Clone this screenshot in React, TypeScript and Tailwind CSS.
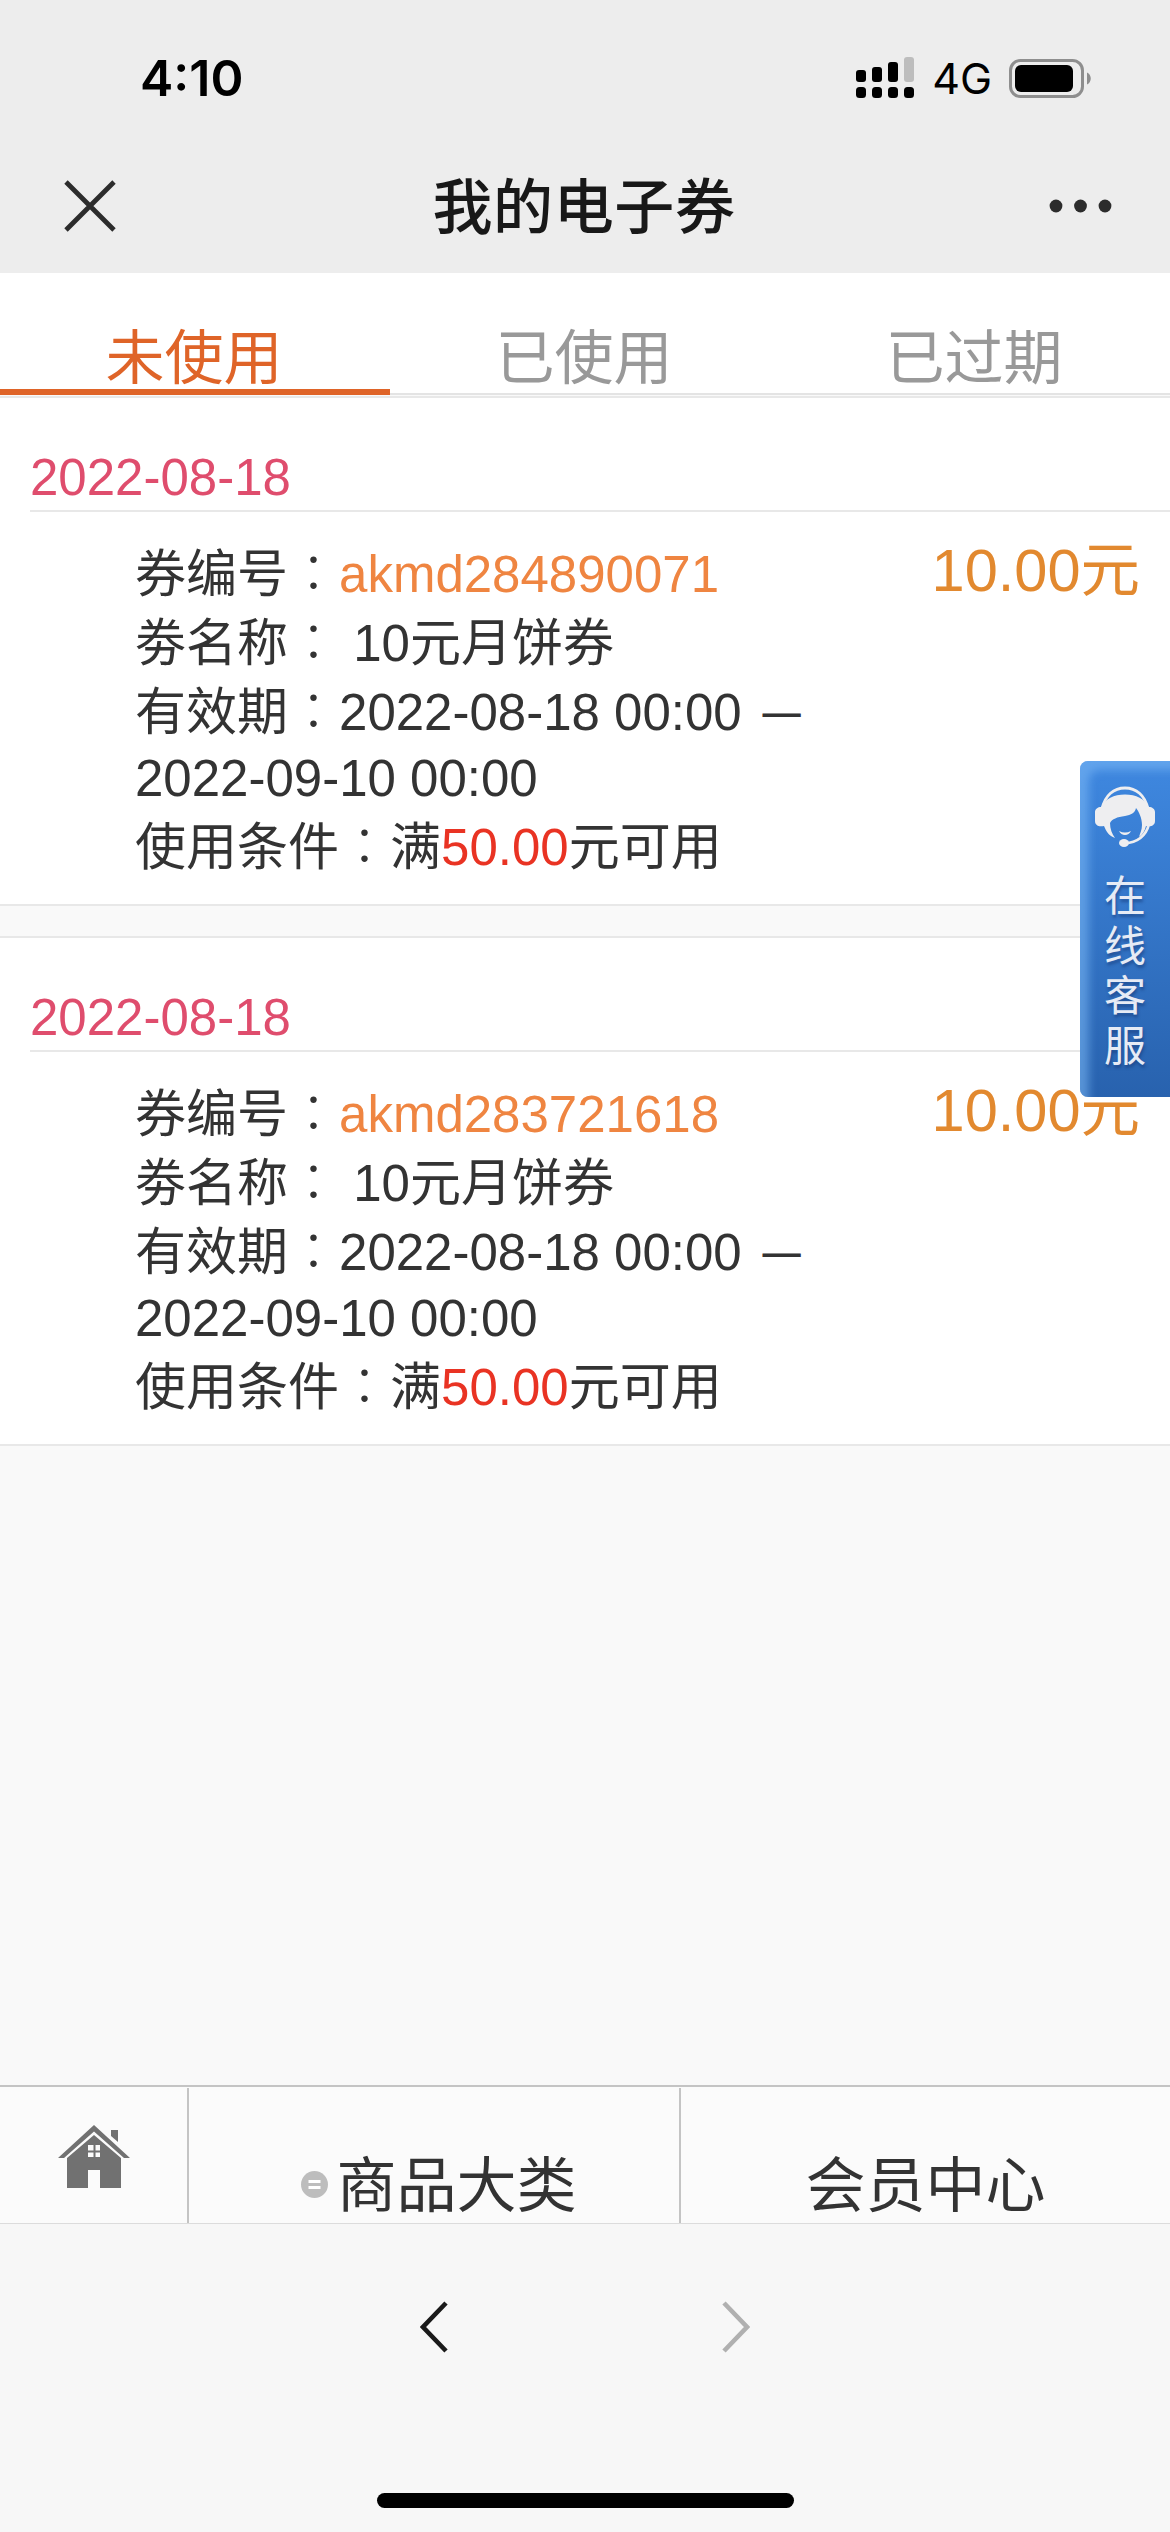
import React from 'react';

interface Coupon {
  date: string;
  code: string;
  name: string;
  start: string;
  end: string;
  threshold: string;
  amount: string;
}

const tabs = ['未使用', '已使用', '已过期'];

const coupons: Coupon[] = [
  {
    date: '2022-08-18',
    code: 'akmd284890071',
    name: '10元月饼券',
    start: '2022-08-18 00:00',
    end: '2022-09-10 00:00',
    threshold: '50.00',
    amount: '10.00',
  },
  {
    date: '2022-08-18',
    code: 'akmd283721618',
    name: '10元月饼券',
    start: '2022-08-18 00:00',
    end: '2022-09-10 00:00',
    threshold: '50.00',
    amount: '10.00',
  },
];

// the TC face keeps the full-width colon in the middle of its cell
const Colon = () => (
  <span className="font-['Noto_Sans_CJK_TC',sans-serif] leading-none font-light">：</span>
);

const SignalIcon = () => (
  <svg width="59" height="42" viewBox="0 0 59 42">
    <rect x="0" y="13" width="10" height="12" rx="3" />
    <rect x="16" y="10" width="10" height="15" rx="3" />
    <rect x="32" y="5" width="10" height="20" rx="3" />
    <rect x="48" y="0" width="10" height="25" rx="3" fill="#bdbdbd" />
    <rect x="0" y="30" width="10" height="11" rx="3.5" />
    <rect x="16" y="30" width="10" height="11" rx="3.5" />
    <rect x="32" y="30" width="10" height="11" rx="3.5" />
    <rect x="48" y="30" width="10" height="11" rx="3.5" />
  </svg>
);

const BatteryIcon = () => (
  <svg width="83" height="39" viewBox="0 0 83 39">
    <rect x="1.5" y="1.5" width="72" height="36" rx="10" fill="none" stroke="#8e8e8e" strokeWidth="3" />
    <rect x="6" y="6" width="58" height="27" rx="6" />
    <path d="M78 13.5c5 2 5 10 0 12z" fill="#8e8e8e" />
  </svg>
);

const CloseIcon = () => (
  <svg width="52" height="52" viewBox="0 0 52 52" stroke="#2c2c2c" strokeWidth="4.8">
    <path d="M2 2l48 48M50 2L2 50" />
  </svg>
);

const MoreIcon = () => (
  <svg width="64" height="14" viewBox="0 0 64 14" fill="#2c2c2c">
    <circle cx="7" cy="7" r="6.4" />
    <circle cx="31.5" cy="7" r="6.4" />
    <circle cx="56" cy="7" r="6.4" />
  </svg>
);

const HomeIcon = () => (
  <svg width="72" height="64" viewBox="0 0 72 64" fill="#717171">
    <path d="M36 0l36 33h-6L36 6.5 6 33H0z" />
    <path d="M53 5h7v12l-7-6z" />
    <path
      fillRule="evenodd"
      d="M36 10l27 23v30H42V45H30v18H9V33zM30 20h5.5v5.5H30zM37.5 20H42v5.5h-4.5zM30 27.5h5.5V32H30zM37.5 27.5H42V32h-4.5z"
    />
  </svg>
);

const MenuBadge = () => (
  <svg width="27" height="27" viewBox="0 0 27 27">
    <circle cx="13.5" cy="13.5" r="13.5" fill="#bdbdbd" />
    <path d="M7.5 10.5h12M7.5 16.5h12" stroke="#fff" strokeWidth="3.2" />
  </svg>
);

const HeadsetIcon = () => (
  <svg width="62" height="62" viewBox="0 0 62 62" fill="#eeeef0">
    <path
      d="M8 23C11 9 20 2 31 2s20 7 23 21M55 38c-3 12-12 19-24 19"
      fill="none"
      stroke="#eeeef0"
      strokeWidth="2.8"
    />
    {/* ear cups, hair and the sides of the face */}
    <path d="M10 40c-6 1-9-1-9-5V26c0-3 3-5 6-5C11 13 20 8.5 31 8.5S51 13 55 21c3 0 6 2 6 5v9c0 4-3 6-9 5-1 5-4 9-7 11 1-4 3-7 3-12 0-7-3-13-6-17-1 5-5 7-11 8-8 1-13 3-15 7 0 6 2 11 5 15-6-2-9-7-11-12z" />
    <path d="M25 45q6 3 12 0-2 4-6 4t-6-4z" />
    <ellipse cx="30" cy="57" rx="5" ry="4" />
  </svg>
);

const CouponCard: React.FC<{ coupon: Coupon }> = ({ coupon }) => (
  <div className="h-[510px] border-y-2 border-[#e8e8e8] bg-white">
    <div className="ml-[30px] h-[114px] border-b-2 border-[#e8e8e8] pt-[50px] text-[51px] leading-[60px] text-[#df4d6d]">
      {coupon.date}
    </div>
    <div className="flex justify-between pt-[28px] pr-[30px] pl-[135px]">
      <div className="text-[51px] leading-[69px] whitespace-nowrap text-[#333]">
        <p>
          券编号
          <Colon />
          <span className="text-[#ef8541]">{coupon.code}</span>
        </p>
        <p>
          劵名称
          <Colon /> {coupon.name}
        </p>
        <p>
          有效期
          <Colon />
          {coupon.start}{' '}
          <span className="inline-block -translate-y-[2px] scale-x-75 leading-none">—</span>
        </p>
        <p className="leading-[63px]">{coupon.end}</p>
        <p className="leading-[75px]">
          使用条件
          <Colon />满<span className="text-[#e93323]">{coupon.threshold}</span>元可用
        </p>
      </div>
      <p className="text-[59.5px] leading-[61px] text-[#e2892f]">{coupon.amount}元</p>
    </div>
  </div>
);

const ServiceButton = () => (
  <div className="absolute top-[761px] right-0 flex h-[336px] w-[90px] flex-col items-center rounded-l-lg bg-gradient-to-b from-[#3f88e0] to-[#2862ae] pt-[25px] shadow-[inset_12px_12px_8px_-3px_rgba(125,185,245,0.55)]">
    <HeadsetIcon />
    <div className="mt-[24px] flex flex-col text-[42px] leading-[50px] text-[#e6ebf5] [text-shadow:1px_3px_3px_rgba(20,50,110,0.5)]">
      {['在', '线', '客', '服'].map((char) => (
        <span key={char}>{char}</span>
      ))}
    </div>
  </div>
);

export default function App() {
  return (
    <div className="relative flex h-[2532px] w-[1170px] flex-col overflow-hidden bg-[#f9f9f9] font-['Liberation_Sans','Noto_Sans_CJK_SC',sans-serif]">
      <header className="h-[273px] bg-[#ededed]">
        <div className="flex h-[140px] items-center justify-between pt-[16px] pr-[78px] pl-[140px]">
          <span className="font-['Inter',sans-serif] text-[50px] font-semibold">4:10</span>
          <div className="flex items-center">
            <SignalIcon />
            <span className="ml-[17px] font-['Inter',sans-serif] text-[43px]">4G</span>
            <span className="ml-[17px]">
              <BatteryIcon />
            </span>
          </div>
        </div>
        <div className="flex h-[132px] items-center justify-between pr-[57px] pl-[64px]">
          <CloseIcon />
          <h1 className="pt-[6px] pl-[3px] text-[60px] font-medium tracking-[0.6px] text-[#181818]">
            我的电子券
          </h1>
          <MoreIcon />
        </div>
      </header>

      <nav className="grid h-[120px] grid-cols-3 bg-white text-center text-[59px] leading-[60px]">
        {tabs.map((tab, i) => (
          <div
            key={tab}
            className={
              i === 0
                ? 'border-b-[6px] border-[#df6428] pt-[56px] pr-[2px] text-[#df6428]'
                : 'border-b-2 border-[#e4e4e4] pt-[56px] pr-[2px] text-[#999]'
            }
          >
            {tab}
          </div>
        ))}
      </nav>

      <main className="flex flex-1 flex-col gap-[30px] pt-[3px]">
        {coupons.map((coupon) => (
          <CouponCard key={coupon.code} coupon={coupon} />
        ))}
      </main>

      <footer className="flex h-[139px] border-t-2 border-b border-t-[#c4c4c4] border-b-[#dcdcdc] bg-[#fbfbfb] pt-px text-[60px] text-[#333]">
        <div className="flex w-[189px] justify-center border-r-2 border-[#c4c4c4] pt-[37px]">
          <HomeIcon />
        </div>
        <div className="flex w-[492px] items-center justify-center gap-[9px] border-r-2 border-[#c4c4c4] pt-[58px] pl-[9px]">
          <MenuBadge />
          <span className="pt-[4px] leading-[60px]">商品大类</span>
        </div>
        <div className="flex-1 pt-[69px] text-center leading-[60px]">会员中心</div>
      </footer>

      <div className="flex h-[308px] flex-col items-center justify-between bg-[#f7f7f7] pt-[77px] pb-[24px]">
        <div className="flex w-[330px] justify-between">
          <svg width="28" height="52" viewBox="0 0 28 52" fill="none" stroke="#1a1a1a" strokeWidth="4.6">
            <path d="M26 2L3 26l23 24" />
          </svg>
          <svg width="28" height="52" viewBox="0 0 28 52" fill="none" stroke="#b0b0b0" strokeWidth="4.6">
            <path d="M2 2l23 24L2 50" />
          </svg>
        </div>
        <div className="h-[15px] w-[417px] rounded-full bg-black" />
      </div>

      <ServiceButton />
    </div>
  );
}
